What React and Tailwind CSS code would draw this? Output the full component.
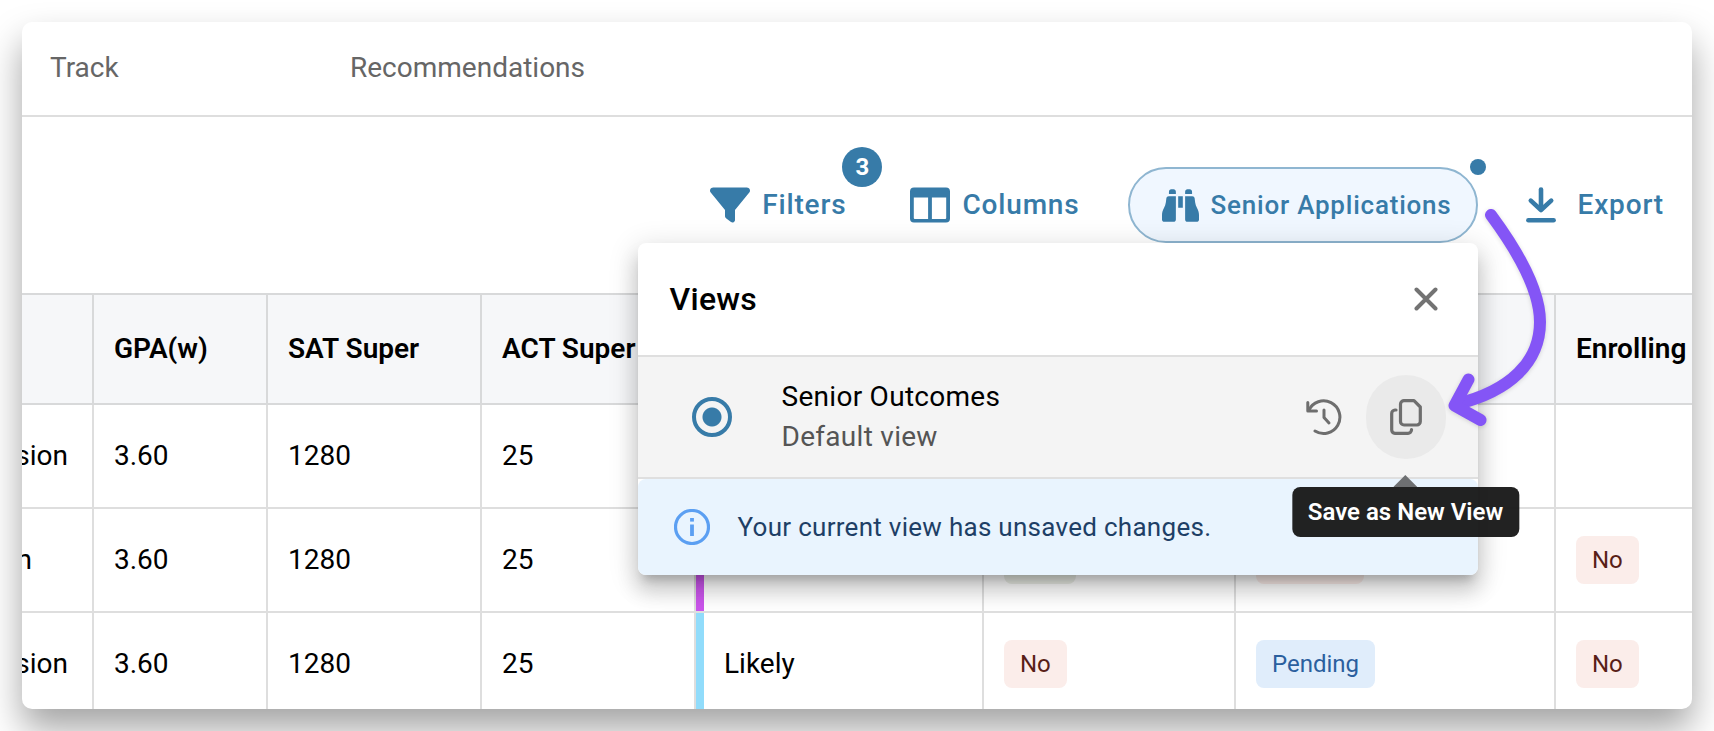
import React from "react";
import { FaFilter, FaBinoculars } from "react-icons/fa6";

const statusStyles = {
  No: "bg-[#fbedea] text-[#591e17]",
  Pending: "bg-[#e0edfb] text-[#2b5f9e]",
};

function Status({ value }) {
  return (
    <span className={`inline-flex h-12 items-center rounded-lg px-4 text-2xl ${statusStyles[value]}`}>
      {value}
    </span>
  );
}

function ColumnsIcon() {
  return (
    <svg viewBox="0 0 40 36" className="h-9 w-10" fill="currentColor" fillRule="evenodd" aria-hidden="true">
      <path d="M4 .5H36A4 4 0 0 1 40 4.500V31.500A4 4 0 0 1 36 35.500H4A4 4 0 0 1 0 31.500V4.500A4 4 0 0 1 4 .5ZM3.800 10.500V31A1 1 0 0 0 4.800 32H18.100V10.500ZM21.900 10.500V32H35.200A1 1 0 0 0 36.200 31V10.500Z" />
    </svg>
  );
}

function DownloadIcon() {
  return (
    <svg viewBox="0 0 30 36" className="h-9 w-[30px]" fill="none" stroke="currentColor" strokeLinecap="round" strokeLinejoin="round" aria-hidden="true">
      <path d="M15 2.5V22" strokeWidth="4.6" />
      <path d="M4.800 13.600 15 23 25.200 13.600" strokeWidth="4.600" />
      <path d="M2.400 33.300H27.600" strokeWidth="4.600" />
    </svg>
  );
}

function CloseIcon() {
  return (
    <svg viewBox="0 0 24 24" className="size-6" fill="none" stroke="currentColor" strokeWidth="4" strokeLinecap="round" aria-hidden="true">
      <path d="M2.500 2.500 21.500 21.500M21.500 2.500 2.500 21.500" />
    </svg>
  );
}

function HistoryIcon() {
  return (
    <svg viewBox="0 0 36 36" className="size-9" fill="none" stroke="currentColor" strokeWidth="3" strokeLinecap="round" strokeLinejoin="round" aria-hidden="true">
      <path d="M2.800 11.300A16.300 16.300 0 1 1 9 32" />
      <path d="M1.800 3.500V12H10.500" />
      <path d="M18 11V18.500L23 24" />
    </svg>
  );
}

function CopyIcon() {
  return (
    <svg viewBox="0 0 32 36" className="h-9 w-8" fill="none" stroke="currentColor" strokeWidth="3.200" strokeLinecap="round" strokeLinejoin="round" aria-hidden="true">
      <path d="M13.500 1.700H24L30.300 8V22.500A3.500 3.500 0 0 1 27 26H14A3.500 3.500 0 0 1 10.500 22.500V5A3.500 3.500 0 0 1 14 1.700" />
      <path d="M6 11H5A3.500 3.500 0 0 0 1.700 14.500V31A3.500 3.500 0 0 0 5 34.300H18A3.500 3.500 0 0 0 21.500 31V30.500" />
    </svg>
  );
}

function InfoIcon() {
  return (
    <svg viewBox="0 0 36 36" className="size-9 shrink-0" fill="none" stroke="#5b9ff2" aria-hidden="true">
      <circle cx="18" cy="18" r="16.500" strokeWidth="3.200" />
      <path d="M18 15.500V27" strokeWidth="3.800" />
      <path d="M18 9V12.600" strokeWidth="3.800" />
    </svg>
  );
}

function PointerArrow() {
  return (
    <svg
      viewBox="1440 200 120 230"
      className="pointer-events-none absolute top-8 -right-[83px] z-30 h-[230px] w-[120px] drop-shadow-sm"
      fill="none"
      stroke="#8455f6"
      strokeWidth="12"
      strokeLinecap="round"
      strokeLinejoin="round"
      aria-hidden="true"
    >
      <path d="M1490 216C1524 262 1539 298 1539 323C1539 363 1509 392 1456 405" />
      <path d="M1467.500 380.500 1453.500 406.500 1479.500 421" />
    </svg>
  );
}

function ViewsPopover() {
  return (
    <section
      aria-label="Views"
      className="absolute top-full right-0 z-20 w-[840px] rounded-lg bg-white font-normal tracking-[0.01em] shadow-[0_10px_10px_-6px_rgba(0,0,0,0.2),0_16px_20px_2px_rgba(0,0,0,0.14),0_6px_28px_4px_rgba(0,0,0,0.12)]"
    >
      <header className="flex h-[114px] items-center justify-between border-b-2 border-[#dfdfdf] pr-10 pl-8">
        <h2 className="text-[32px] font-medium text-black">Views</h2>
        <button type="button" aria-label="Close" className="text-[#737373]">
          <CloseIcon />
        </button>
      </header>

      <div className="flex h-[122px] items-center border-b-2 border-[#dfdfdf] bg-[#f4f4f4] pr-8 pl-[54px]">
        <input
          id="view-outcomes"
          type="radio"
          name="view"
          defaultChecked
          className="size-10 appearance-none rounded-full border-4 border-[#377ba8] bg-[radial-gradient(circle,#377ba8_0_9px,transparent_10px)]"
        />
        <label htmlFor="view-outcomes" className="ml-[50px] flex-1 text-[28px] leading-10">
          <span className="block text-black">Senior Outcomes</span>
          <span className="block text-[#555555]">Default view</span>
        </label>
        <button type="button" aria-label="Revert changes" className="mr-6 text-[#6e6e6e]">
          <HistoryIcon />
        </button>
        <div className="relative">
          <button
            type="button"
            aria-describedby="save-tip"
            aria-label="Save as New View"
            className="flex h-[84px] w-20 items-center justify-center rounded-full bg-[#eaeaea] text-[#6e6e6e]"
          >
            <CopyIcon />
          </button>
          <div id="save-tip" role="tooltip" className="absolute top-full left-1/2 z-10 mt-4 flex -translate-x-1/2 flex-col items-center">
            <svg viewBox="0 0 24 12" className="h-3 w-6" aria-hidden="true">
              <path d="M12 0 24 12H0Z" fill="#6e7072" />
            </svg>
            <span className="flex h-[50px] items-center rounded-lg bg-[#161616]/95 px-4 text-2xl font-semibold tracking-normal whitespace-nowrap text-white">
              Save as New View
            </span>
          </div>
        </div>
      </div>

      <div role="status" className="flex h-24 items-center gap-7 rounded-lg bg-[#e9f4fe] px-9 text-[26px] text-[#1e3f66]">
        <InfoIcon />
        <p>Your current view has unsaved changes.</p>
      </div>
    </section>
  );
}

function Toolbar() {
  return (
    <div className="relative z-10 flex items-center justify-end gap-12 py-[50px] pr-7 text-[28px] font-medium tracking-[0.03em] text-[#377ba8]">
      <button type="button" className="relative mr-4 flex items-center gap-3">
        <FaFilter className="size-10" />
        Filters
        <span className="absolute -top-[37px] -right-9 flex size-10 items-center justify-center rounded-full bg-[#377ba8] text-2xl font-bold tracking-normal text-white">
          3
        </span>
      </button>
      <button type="button" className="flex items-center gap-3">
        <ColumnsIcon />
        Columns
      </button>
      <div className="relative">
        <button
          type="button"
          aria-expanded="true"
          className="flex h-[76px] items-center gap-3 rounded-full border-2 border-[#8fb6d1] bg-[#f0f7ff] pr-6 pl-8 text-[26px] tracking-[0.03em]"
        >
          <FaBinoculars className="size-[37px]" />
          Senior Applications
        </button>
        <span className="absolute -top-2 -right-2 size-4 rounded-full bg-[#377ba8]" />
        <ViewsPopover />
        <PointerArrow />
      </div>
      <button type="button" className="flex items-center gap-[22px]">
        <DownloadIcon />
        Export
      </button>
    </div>
  );
}

const rows = [
  { term: "sion", pad: "pr-6", gpa: "3.60", sat: "1280", act: "25" },
  { term: "n", pad: "pr-15", gpa: "3.60", sat: "1280", act: "25", bar: "bg-[#cb55ec]", chips: true, enrolling: "No" },
  {
    term: "sion",
    pad: "pr-6",
    gpa: "3.60",
    sat: "1280",
    act: "25",
    bar: "bg-[#91dcfb]",
    chance: "Likely",
    applied: "No",
    result: "Pending",
    enrolling: "No",
  },
];

const headCell = "h-28 border-y-2 border-r-2 border-[#d8d9da] bg-[#f6f7f9] px-5 text-left font-semibold whitespace-nowrap";
const cell = "h-26 border-r-2 border-b-2 border-[#dedede] px-5";

function ApplicationsTable() {
  return (
    <table className="w-full table-fixed border-separate border-spacing-0 text-[28px] text-black">
      <colgroup>
        <col className="w-[72px]" />
        <col className="w-[174px]" />
        <col className="w-[214px]" />
        <col className="w-[214px]" />
        <col className="w-[288px]" />
        <col className="w-[252px]" />
        <col className="w-[320px]" />
        <col />
      </colgroup>
      <thead>
        <tr>
          <td className={headCell} />
          <th className={headCell}>GPA(w)</th>
          <th className={headCell}>SAT Super</th>
          <th className={headCell}>ACT Super</th>
          <td className={headCell} />
          <td className={headCell} />
          <td className={headCell} />
          <th className="h-28 border-y-2 border-[#d8d9da] bg-[#f6f7f9] pl-5 text-left font-semibold">Enrolling</th>
        </tr>
      </thead>
      <tbody>
        {rows.map((row, i) => (
          <tr key={i}>
            <td className="h-26 overflow-hidden border-r-2 border-b-2 border-[#dedede]">
              <div className={`flex justify-end ${row.pad}`}>{row.term}</div>
            </td>
            <td className={cell}>{row.gpa}</td>
            <td className={cell}>{row.sat}</td>
            <td className={cell}>{row.act}</td>
            <td className="relative h-26 border-r-2 border-b-2 border-[#dedede] pl-7">
              {row.bar && <span className={`absolute inset-y-0 left-0 w-2 ${row.bar}`} />}
              {row.chance}
            </td>
            <td className={cell}>
              <div className="flex">
                {row.chips && <span className="h-12 w-18 rounded-lg bg-[#ecefe8]" />}
                {row.applied && <Status value={row.applied} />}
              </div>
            </td>
            <td className={cell}>
              <div className="flex">
                {row.chips && <span className="h-12 w-27 rounded-lg bg-[#fbedea]" />}
                {row.result && <Status value={row.result} />}
              </div>
            </td>
            <td className="h-26 border-b-2 border-[#dedede] pl-5">
              <div className="flex">{row.enrolling && <Status value={row.enrolling} />}</div>
            </td>
          </tr>
        ))}
      </tbody>
    </table>
  );
}

export default function App() {
  return (
    <div className="flex h-screen flex-col bg-white p-[22px] font-['Roboto',sans-serif]">
      <main className="min-h-0 flex-1 overflow-hidden rounded-[10px] bg-white shadow-[0_20px_36px_rgba(0,0,0,0.36)]">
        <nav className="flex h-[95px] items-center border-b-2 border-[#dedede] px-7 pb-0.5 text-[28px] text-[#666666]">
          <a href="#track" className="w-[300px]">Track</a>
          <a href="#recommendations">Recommendations</a>
        </nav>
        <Toolbar />
        <ApplicationsTable />
      </main>
    </div>
  );
}
